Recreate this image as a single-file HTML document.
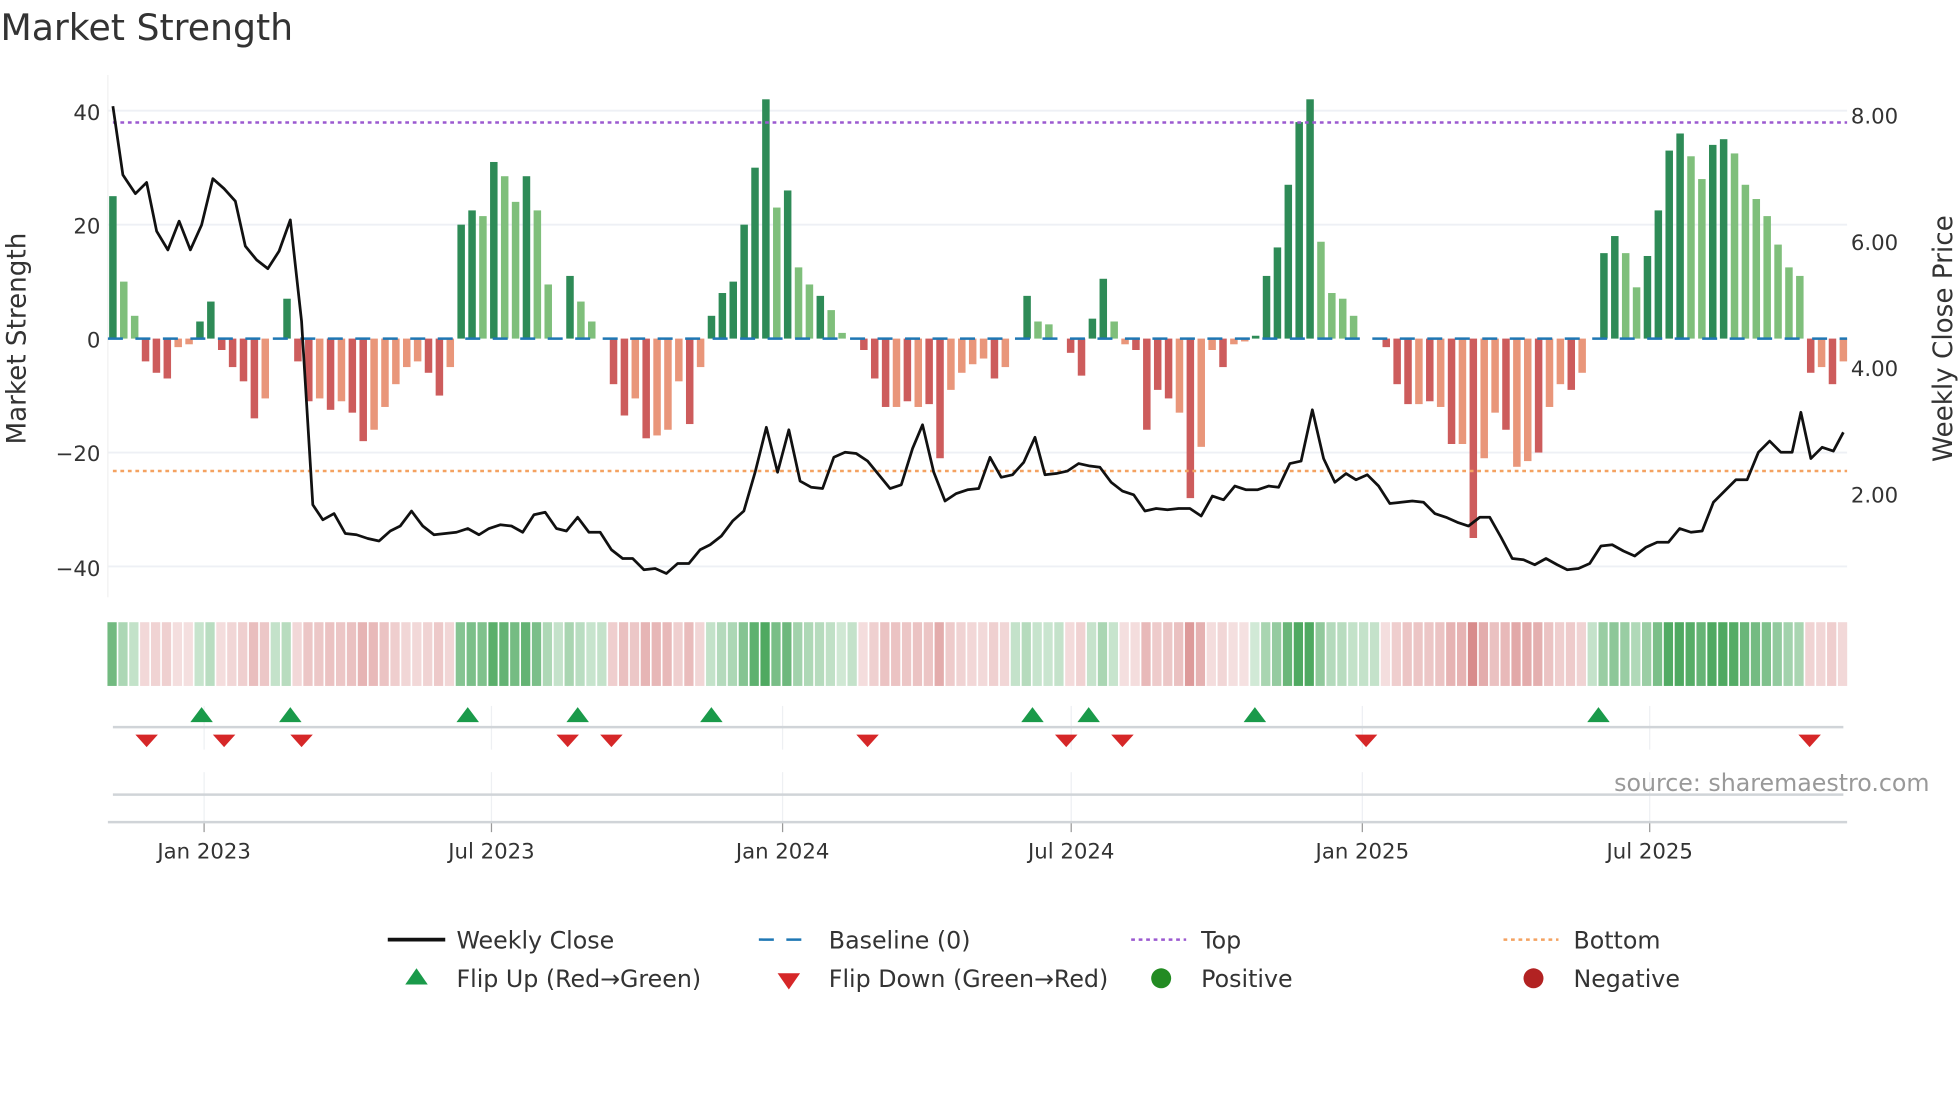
<!DOCTYPE html>
<html><head><meta charset="utf-8">
<style>
html,body{margin:0;padding:0;background:#fff;}
svg{display:block;}
text{font-family:"DejaVu Sans","Liberation Sans",sans-serif;fill:#333;}
</style></head>
<body>
<svg id="s" width="1960" height="1102" viewBox="0 0 1568 882" xmlns="http://www.w3.org/2000/svg">
<rect width="1568" height="882" fill="#fff"/>
<text x="0" y="32" font-size="29">Market Strength</text>
<g id="grid"></g>
<g id="bars"></g>
<g id="strip"></g>
<g id="fg"></g>
<g font-size="17">
<text x="80" y="96" text-anchor="end">40</text>
<text x="80" y="187" text-anchor="end">20</text>
<text x="80" y="278" text-anchor="end">0</text>
<text x="80" y="369" text-anchor="end">−20</text>
<text x="80" y="461" text-anchor="end">−40</text>
<text x="1481" y="99">8.00</text>
<text x="1481" y="200">6.00</text>
<text x="1481" y="301">4.00</text>
<text x="1481" y="402">2.00</text>
</g>
<text font-size="21" transform="translate(20,271) rotate(-90)" text-anchor="middle">Market Strength</text>
<text font-size="21" transform="translate(1562,271) rotate(-90)" text-anchor="middle">Weekly Close Price</text>
<g font-size="17" text-anchor="middle">
<text x="163" y="687">Jan 2023</text>
<text x="393" y="687">Jul 2023</text>
<text x="626" y="687">Jan 2024</text>
<text x="857" y="687">Jul 2024</text>
<text x="1090" y="687">Jan 2025</text>
<text x="1320" y="687">Jul 2025</text>
</g>
<text x="1544" y="633" font-size="19" text-anchor="end" style="fill:#999">source: sharemaestro.com</text>
<g font-size="19">
<line x1="310" y1="752" x2="356" y2="752" stroke="#111" stroke-width="3"/>
<text x="365" y="759">Weekly Close</text>
<line x1="607" y1="752" x2="651" y2="752" stroke="#1f77b4" stroke-width="2" stroke-dasharray="12,10"/>
<text x="663" y="759">Baseline (0)</text>
<line x1="905" y1="752" x2="949" y2="752" stroke="#9b59d0" stroke-width="2" stroke-dasharray="3,3"/>
<text x="961" y="759">Top</text>
<line x1="1203" y1="752" x2="1247" y2="752" stroke="#f4a261" stroke-width="2" stroke-dasharray="3,3"/>
<text x="1259" y="759">Bottom</text>
<polygon points="333,775 342,788 324,788" fill="#1a9a4a"/>
<text x="365" y="790">Flip Up (Red→Green)</text>
<polygon points="622,779 640,779 631,792" fill="#d62728"/>
<text x="663" y="790">Flip Down (Green→Red)</text>
<circle cx="929" cy="783" r="8" fill="#228b22"/>
<text x="961" y="790">Positive</text>
<circle cx="1227" cy="783" r="8" fill="#b22222"/>
<text x="1259" y="790">Negative</text>
</g>
</svg>
<script>
var NS="http://www.w3.org/2000/svg";
function el(p,t,a){var e=document.createElementNS(NS,t);for(var k in a)e.setAttribute(k,a[k]);p.appendChild(e);return e;}
var grid=document.getElementById('grid'),bars=document.getElementById('bars'),strip=document.getElementById('strip'),fg=document.getElementById('fg');
function Y(v){return 271-v*4.56;}
[40,20,-20,-40].forEach(function(v){el(grid,'line',{x1:86,x2:1478,y1:Y(v),y2:Y(v),stroke:'#eef0f5','stroke-width':1.5});});
el(grid,'line',{x1:86,x2:86,y1:60,y2:478,stroke:'#f0f0f0','stroke-width':1});
var data="25D 10L 4L -4R -6R -7R -1.5O -1O 3D 6.5D -2R -5R -7.5R -14R -10.5O 0Z 7D -4R -11R -10.5O -12.5R -11O -13R -18R -16O -12O -8O -5O -4O -6R -10R -5O 20D 22.5D 21.5L 31D 28.5L 24L 28.5D 22.5L 9.5L 0Z 11D 6.5L 3L 0Z -8R -13.5R -10.5O -17.5R -17O -16O -7.5O -15R -5O 4D 8D 10D 20D 30D 42D 23L 26D 12.5L 9.5L 7.5D 5L 1L 0Z -2R -7R -12R -12O -11R -12O -11.5R -21R -9O -6O -4.5O -3.5O -7R -5O 0Z 7.5D 3L 2.5L 0Z -2.5R -6.5R 3.5D 10.5D 3L -1O -2R -16R -9R -10.5R -13O -28R -19O -2O -5R -1O -0.5O 0.5D 11D 16D 27D 38D 42D 17L 8L 7L 4L 0Z 0Z -1.5R -8R -11.5R -11.5O -11R -12O -18.5R -18.5O -35R -21O -13O -16R -22.5O -21.5O -20R -12O -8O -9R -6O 0Z 15D 18D 15L 9L 14.5D 22.5D 33D 36D 32L 28L 34D 35D 32.5L 27L 24.5L 21.5L 16.5L 12.5L 11L -6R -5O -8R -4O".split(" ");
var col={D:'#2e8b57',L:'#7fbf7b',R:'#cd5c5c',O:'#e9967a',Z:'#fff'};
var n=data.length,x0=90,dx=(1475-90)/(n-1);
data.forEach(function(s,i){
 var v=parseFloat(s),c=s.slice(-1),x=x0+i*dx;
 if(v!==0){var y=Math.min(Y(v),271),h=Math.abs(v)*4.56;el(bars,'rect',{x:x-3,y:y,width:6,height:h,fill:col[c]});}
 var a=Math.min(1,0.25+Math.abs(v)/45);
 var fill=v>=0?'rgba(60,160,80,'+(v===0?0.3:a*0.9)+')':'rgba(200,90,90,'+(a*0.7)+')';
 el(strip,'rect',{x:x-dx/2,y:498,width:dx-1.3,height:51,fill:fill});
});
el(fg,'line',{x1:86,x2:1478,y1:271,y2:271,stroke:'#1f77b4','stroke-width':2,'stroke-dasharray':'12,10'});
el(fg,'line',{x1:90,x2:1478,y1:98,y2:98,stroke:'#9b59d0','stroke-width':2,'stroke-dasharray':'3,3'});
el(fg,'line',{x1:90,x2:1478,y1:377,y2:377,stroke:'#f4a261','stroke-width':2,'stroke-dasharray':'3,3'});
var pts="90,85 98,140 108,155 117,146 125,185 134,200 143,177 152,200 161,180 170,143 179,151 188,161 196,197 205,208 214,215 223,201 232,176 241,257 250,404 258,416 267,411 276,427 285,428 294,431 303,433 312,425 320,421 329,409 338,421 347,428 356,427 365,426 374,423 383,428 391,423 400,420 409,421 418,426 427,412 436,410 445,423 453,425 462,414 471,426 480,426 489,440 498,447 506,447 515,456 524,455 533,459 542,451 551,451 560,440 568,436 577,429 586,417 595,409 604,378 613,342 622,378 631,344 640,385 649,390 658,391 667,366 676,362 685,363 694,369 703,380 712,391 721,388 730,359 738,340 747,378 756,401 765,395 774,392 783,391 792,366 801,382 810,380 819,370 828,350 836,380 845,379 854,377 863,371 872,373 880,374 889,386 898,393 907,396 916,409 925,407 934,408 943,407 952,407 961,413 970,397 979,400 988,389 997,392 1006,392 1015,389 1023,390 1032,371 1041,369 1050,328 1059,367 1068,386 1077,379 1085,384 1094,380 1103,389 1112,403 1121,402 1130,401 1139,402 1148,411 1157,414 1166,418 1175,421 1184,414 1192,414 1201,430 1210,447 1219,448 1228,452 1237,447 1246,452 1254,456 1263,455 1272,451 1281,437 1290,436 1299,441 1308,445 1317,438 1326,434 1335,434 1344,423 1353,426 1362,425 1371,402 1380,393 1389,384 1398,384 1407,362 1416,353 1425,362 1434,362 1441,330 1449,367 1458,358 1467,361 1475,346";
el(fg,'polyline',{points:pts,fill:'none',stroke:'#111','stroke-width':2.2,'stroke-linejoin':'round'});
[163,393,626,857,1090,1320].forEach(function(x){
 el(fg,'line',{x1:x,x2:x,y1:565,y2:600,stroke:'#eef0f3','stroke-width':1});
 el(fg,'line',{x1:x,x2:x,y1:618,y2:658,stroke:'#eef0f3','stroke-width':1});
 el(fg,'line',{x1:x,x2:x,y1:658,y2:666,stroke:'#999','stroke-width':1});
});
el(fg,'line',{x1:90,x2:1475,y1:582,y2:582,stroke:'#d0d4d8','stroke-width':2});
el(fg,'line',{x1:90,x2:1475,y1:636,y2:636,stroke:'#d0d4d8','stroke-width':2});
el(fg,'line',{x1:86,x2:1478,y1:658,y2:658,stroke:'#d0d4d8','stroke-width':2});
[161,232,374,462,569,826,871,1004,1279].forEach(function(x){el(fg,'polygon',{points:x+',566 '+(x+9)+',578 '+(x-9)+',578',fill:'#1a9a4a'});});
[117,179,241,454,489,694,853,898,1093,1448].forEach(function(x){el(fg,'polygon',{points:(x-9)+',588 '+(x+9)+',588 '+x+',598',fill:'#d62728'});});
</script>
</body></html>
